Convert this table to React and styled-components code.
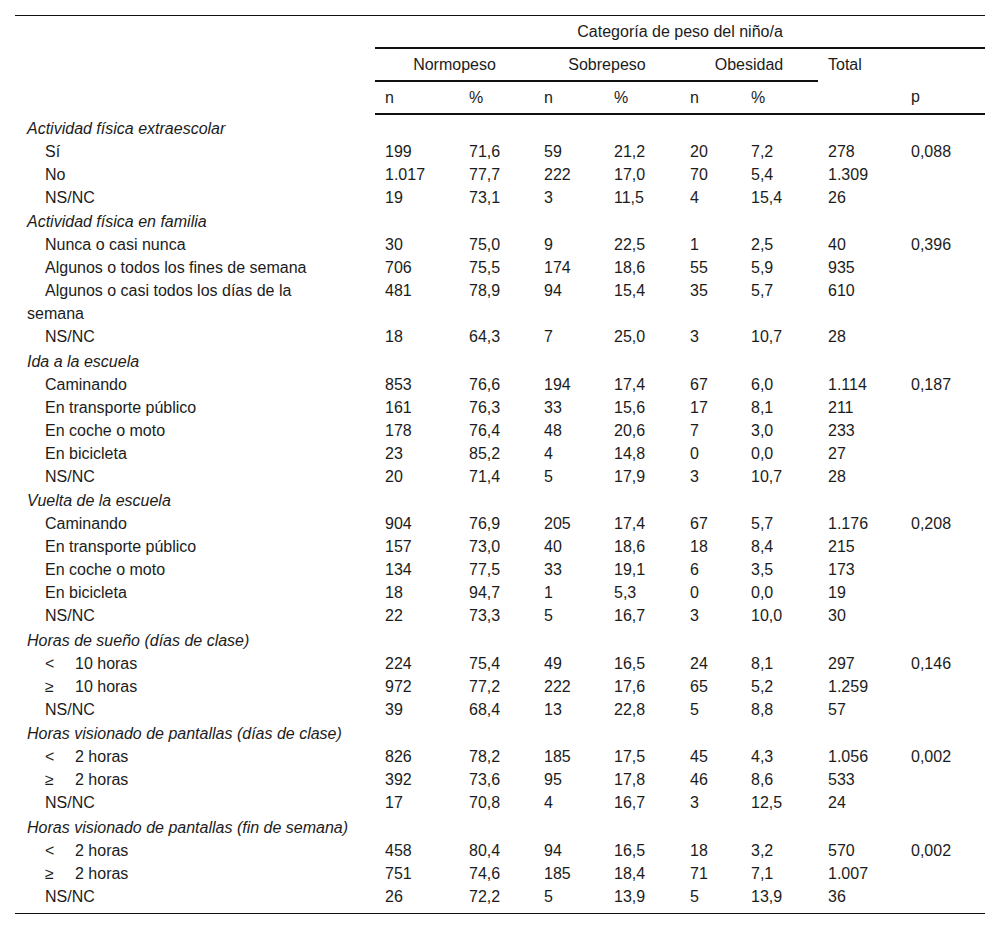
import styled, { createGlobalStyle } from "styled-components";

const GlobalStyle = createGlobalStyle`
  body {
    margin: 0;
    background: #fff;
    font-family: "Liberation Sans", Arial, sans-serif;
    color: #1c1c1c;
  }
`;

const groups = [
  {
    title: "Actividad física extraescolar",
    p: "0,088",
    rows: [
      ["Sí", "199", "71,6", "59", "21,2", "20", "7,2", "278"],
      ["No", "1.017", "77,7", "222", "17,0", "70", "5,4", "1.309"],
      ["NS/NC", "19", "73,1", "3", "11,5", "4", "15,4", "26"],
    ],
  },
  {
    title: "Actividad física en familia",
    p: "0,396",
    rows: [
      ["Nunca o casi nunca", "30", "75,0", "9", "22,5", "1", "2,5", "40"],
      ["Algunos o todos los fines de semana", "706", "75,5", "174", "18,6", "55", "5,9", "935"],
      ["Algunos o casi todos los días de la semana", "481", "78,9", "94", "15,4", "35", "5,7", "610"],
      ["NS/NC", "18", "64,3", "7", "25,0", "3", "10,7", "28"],
    ],
  },
  {
    title: "Ida a la escuela",
    p: "0,187",
    rows: [
      ["Caminando", "853", "76,6", "194", "17,4", "67", "6,0", "1.114"],
      ["En transporte público", "161", "76,3", "33", "15,6", "17", "8,1", "211"],
      ["En coche o moto", "178", "76,4", "48", "20,6", "7", "3,0", "233"],
      ["En bicicleta", "23", "85,2", "4", "14,8", "0", "0,0", "27"],
      ["NS/NC", "20", "71,4", "5", "17,9", "3", "10,7", "28"],
    ],
  },
  {
    title: "Vuelta de la escuela",
    p: "0,208",
    rows: [
      ["Caminando", "904", "76,9", "205", "17,4", "67", "5,7", "1.176"],
      ["En transporte público", "157", "73,0", "40", "18,6", "18", "8,4", "215"],
      ["En coche o moto", "134", "77,5", "33", "19,1", "6", "3,5", "173"],
      ["En bicicleta", "18", "94,7", "1", "5,3", "0", "0,0", "19"],
      ["NS/NC", "22", "73,3", "5", "16,7", "3", "10,0", "30"],
    ],
  },
  {
    title: "Horas de sueño (días de clase)",
    p: "0,146",
    rows: [
      [["<", "10 horas"], "224", "75,4", "49", "16,5", "24", "8,1", "297"],
      [["≥", "10 horas"], "972", "77,2", "222", "17,6", "65", "5,2", "1.259"],
      ["NS/NC", "39", "68,4", "13", "22,8", "5", "8,8", "57"],
    ],
  },
  {
    title: "Horas visionado de pantallas (días de clase)",
    p: "0,002",
    rows: [
      [["<", "2 horas"], "826", "78,2", "185", "17,5", "45", "4,3", "1.056"],
      [["≥", "2 horas"], "392", "73,6", "95", "17,8", "46", "8,6", "533"],
      ["NS/NC", "17", "70,8", "4", "16,7", "3", "12,5", "24"],
    ],
  },
  {
    title: "Horas visionado de pantallas (fin de semana)",
    p: "0,002",
    rows: [
      [["<", "2 horas"], "458", "80,4", "94", "16,5", "18", "3,2", "570"],
      [["≥", "2 horas"], "751", "74,6", "185", "18,4", "71", "7,1", "1.007"],
      ["NS/NC", "26", "72,2", "5", "13,9", "5", "13,9", "36"],
    ],
  },
];

const colWidths = [360, 84, 75, 70, 76, 61, 77, 83, 84];

const Page = styled.div`
  padding: 15px;
`;

const Table = styled.table`
  width: 970px;
  border-collapse: collapse;
  table-layout: fixed;
  font-size: 16px;
  border-top: 1px solid #111;
  border-bottom: 1px solid #111;
`;

const HeadCell = styled.th`
  font-weight: normal;
  height: ${(p) => p.$h || 31}px;
  padding: ${(p) => (p.$center ? "0" : "0 0 0 10px")};
  text-align: ${(p) => (p.$center ? "center" : "left")};
  vertical-align: middle;
  border-bottom: ${(p) => (p.$line ? "2px solid #111" : "none")};
  line-height: 20px;
`;

const SpacerCell = styled.th`
  padding: 0;
`;

const Cell = styled.td`
  padding: 0 0 0 10px;
  line-height: 23px;
  vertical-align: top;
  white-space: nowrap;
`;

const LabelCell = styled.td`
  padding: 0 30px 0 12px;
  line-height: 23px;
  vertical-align: top;
  text-indent: ${(p) => (p.$indent ? "18px" : "0")};
  font-style: ${(p) => (p.$italic ? "italic" : "normal")};
`;

const GroupRow = styled.tr`
  td {
    padding-top: 1.5px;
  }
`;

const BodyRow = styled.tr`
  td {
    padding-bottom: ${(p) => (p.$last ? "5px" : "0")};
  }
`;

const Sym = styled.span`
  display: inline-block;
  width: 30px;
  text-indent: 0;
`;

const HeadRule = styled.tr`
  th {
    border-bottom: 2px solid #111;
  }
`;

function Label({ value }) {
  if (Array.isArray(value)) {
    return (
      <>
        <Sym>{value[0]}</Sym>
        {value[1]}
      </>
    );
  }
  return value;
}

export default function App() {
  return (
    <Page>
      <GlobalStyle />
      <Table>
        <colgroup>
          {colWidths.map((w, i) => (
            <col key={i} style={{ width: w }} />
          ))}
        </colgroup>
        <thead>
          <tr>
            <SpacerCell rowSpan={3} />
            <HeadCell colSpan={8} $center $line $h={31}>
              Categoría de peso del niño/a
            </HeadCell>
          </tr>
          <tr>
            <HeadCell colSpan={2} $center $line $h={31}>
              Normopeso
            </HeadCell>
            <HeadCell colSpan={2} $center $line>
              Sobrepeso
            </HeadCell>
            <HeadCell colSpan={2} $center $line>
              Obesidad
            </HeadCell>
            <HeadCell>Total</HeadCell>
            <HeadCell />
          </tr>
          <HeadRule>
            <HeadCell $h={31}>n</HeadCell>
            <HeadCell>%</HeadCell>
            <HeadCell>n</HeadCell>
            <HeadCell>%</HeadCell>
            <HeadCell>n</HeadCell>
            <HeadCell>%</HeadCell>
            <HeadCell />
            <HeadCell>p</HeadCell>
          </HeadRule>
        </thead>
        <tbody>
          {groups.map((g, gi) => (
            <>
              <GroupRow key={"g" + gi}>
                <LabelCell $italic colSpan={9}>
                  {g.title}
                </LabelCell>
              </GroupRow>
              {g.rows.map((r, ri) => (
                <BodyRow
                  key={gi + "-" + ri}
                  $last={gi === groups.length - 1 && ri === g.rows.length - 1}
                >
                  <LabelCell $indent>
                    <Label value={r[0]} />
                  </LabelCell>
                  {r.slice(1).map((v, vi) => (
                    <Cell key={vi}>{v}</Cell>
                  ))}
                  <Cell>{ri === 0 ? g.p : ""}</Cell>
                </BodyRow>
              ))}
            </>
          ))}
        </tbody>
      </Table>
    </Page>
  );
}
